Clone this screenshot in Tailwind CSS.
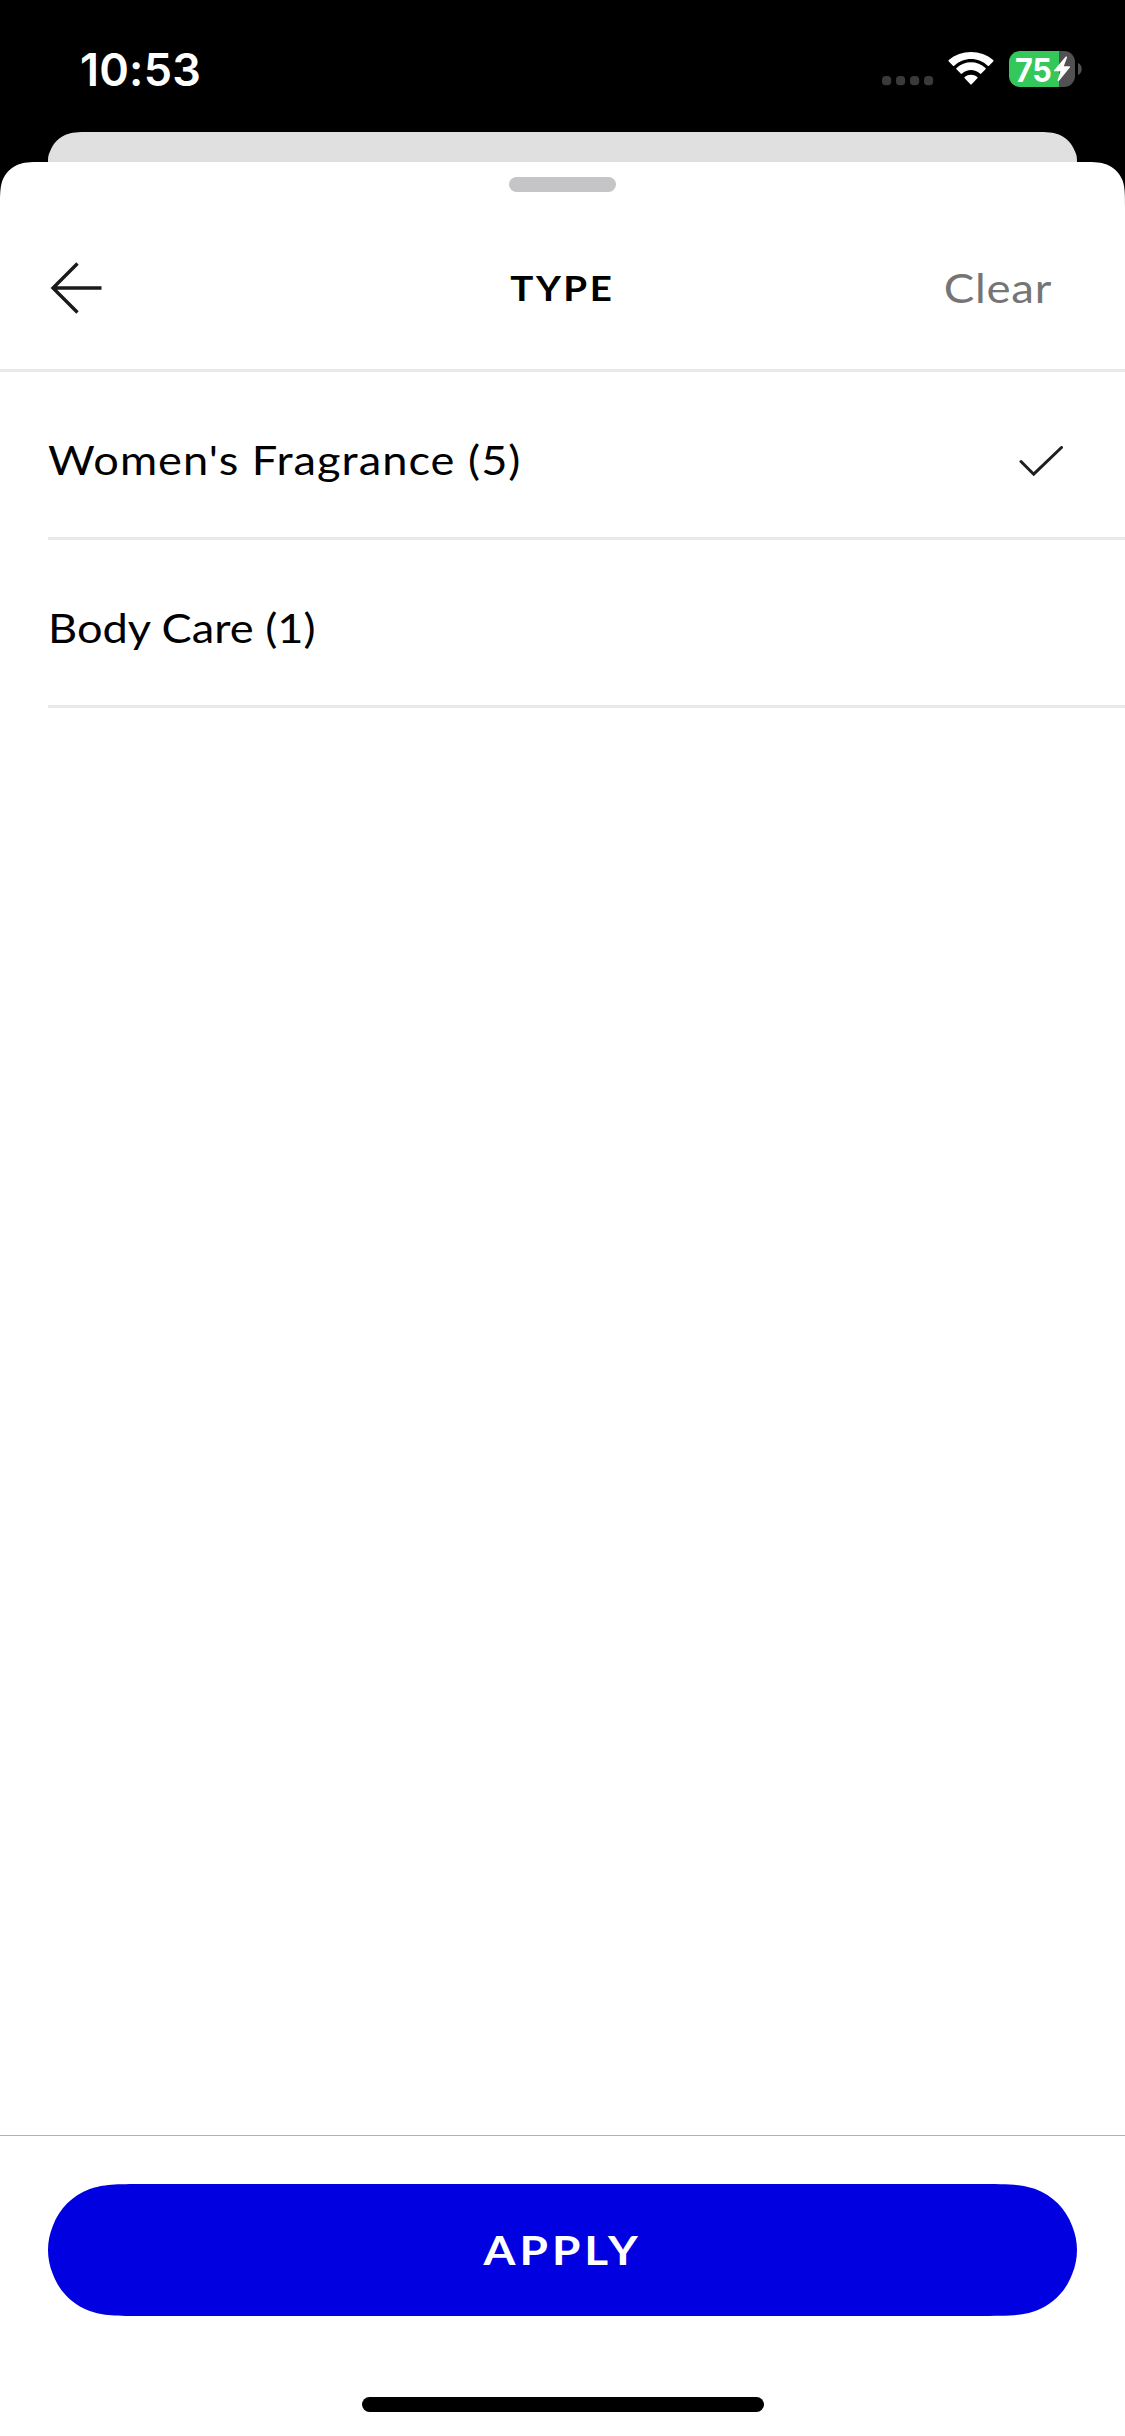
<!DOCTYPE html>
<html lang="en">
<head>
<meta charset="utf-8">
<title>Filter by type</title>
<script src="https://cdn.jsdelivr.net/npm/@tailwindcss/browser@4"></script>
</head>
<body class="bg-black">
<div class="flex h-[2436px] w-[1125px] flex-col overflow-hidden bg-black font-['Lato',sans-serif] text-black">
  <!-- status bar -->
  <header class="flex h-[132px] shrink-0 items-start justify-between pl-20 pr-[43px] font-['Inter',sans-serif] text-white">
    <time class="mt-[43px] text-[45px] leading-[54px] font-semibold tracking-[0.2px]">10:53</time>
    <div class="mt-[51px] flex h-9 items-start">
      <svg class="mt-[25px] h-[10px] w-[52px]" viewBox="0 0 52 10" fill="#3a3a3a"><rect x="0" y="0" width="9.2" height="9.2" rx="3.8"/><rect x="14" y="0" width="9.2" height="9.2" rx="3.8"/><rect x="28" y="0" width="9.2" height="9.2" rx="3.8"/><rect x="42" y="0" width="9.2" height="9.2" rx="3.8"/></svg>
      <svg class="mt-px ml-[14px] h-[33px] w-[46px]" viewBox="0 0 46 33" fill="#fff"><path d="M23 7.1c6.3 0 12.200 2.400 16.700 6.700.4.4.9.4 1.300 0l4.200-4.300c.4-.4.4-1 0-1.400C33.100-2.700 12.900-2.700.8 8.100c-.4.4-.4 1 0 1.400L5 13.800c.4.4.9.4 1.300 0C10.800 9.500 16.700 7.100 23 7.100zM23 18c3.300 0 6.500 1.300 8.900 3.600.4.4 1 .4 1.400 0l4.200-4.300c.4-.4.4-1 0-1.400-8.100-7.700-20.900-7.700-29 0-.4.4-.4 1 0 1.400l4.200 4.300c.4.4 1 .4 1.400 0C16.500 19.300 19.700 18 23 18zM29.300 26.300c.4-.4.4-1 0-1.400-3.600-3-9-3-12.600 0-.4.4-.4 1 0 1.400l5.600 5.900c.4.4 1 .4 1.400 0z"/></svg>
      <div class="relative ml-[15px] flex h-9 w-[66px] items-center rounded-[11px] bg-[linear-gradient(to_right,#34c759_50px,#515153_50px)] pl-[6px]">
        <span class="mt-px origin-left scale-x-93 text-[33px] leading-9 font-bold tracking-[-0.3px]">75</span>
        <svg class="absolute top-[5px] left-[44px] h-[26px] w-[18px]" viewBox="0 0 19 27" fill="#fff"><path d="M13.300.7 1.200 14.700c-.5.6-.2 1.300.6 1.300h6.100L4.900 25c-.3 1.100.8 1.600 1.500.8L17.800 11.900c.5-.6.200-1.300-.6-1.300h-5.800l3.300-9.100C15.100.4 14-.1 13.300.7z"/></svg>
      </div>
      <svg class="mt-3 ml-[3px] h-3 w-[4px]" viewBox="0 0 4 12" fill="#515153"><path d="M0 0c5 2 5 10 0 12z"/></svg>
    </div>
  </header>
  <!-- card peeking out behind the sheet -->
  <div class="relative mx-12 h-[30px] shrink-0 bg-[#e0e0e0] [clip-path:path('M0_30C0_26_0_23_2.200_18.900C5.100_11.200_11.200_5.100_18.900_2.200L20.100_2C26_0_32.700_0_45.900_0H983.100C996.300_0_1003_0_1008.900_2L1010.100_2.200C1017.800_5.100_1023.900_11.200_1026.800_18.900C1029_23_1029_26_1029_30Z')]"></div>
  <main class="flex grow flex-col bg-white [clip-path:path('M0_45.900C0_32.700_0_26_2.200_18.900C5.100_11.200_11.200_5.100_18.900_2.200L20.100_2C26_0_32.700_0_45.900_0H1079.100C1092.300_0_1099_0_1104.900_2L1106.100_2.200C1113.800_5.100_1119.900_11.200_1122.800_18.900C1125_26_1125_32.700_1125_45.900V2274H0Z')]">
    <div class="mt-[15px] h-[15px] w-[107px] shrink-0 self-center rounded-[7.5px] bg-[#c5c5c7]"></div>
    <div class="grid h-[180px] shrink-0 grid-cols-[1fr_auto_1fr] items-center border-b-[3px] border-[#e9e9e9] pl-12 pr-[73px]">
      <button class="mt-[15px] justify-self-start" aria-label="Back"><svg class="block h-[56px] w-[58px]" viewBox="0 0 58 56" fill="none" stroke="#1a1a1a" stroke-width="3.400"><path d="M29.500 3.500 5 28l24.500 24.500M5 28h48.500"/></svg></button>
      <h1 class="ml-[25px] mt-[13px] scale-x-110 text-[35px] leading-[42px] font-bold tracking-[2.300px]">TYPE</h1>
      <button class="mt-[15px] origin-right scale-x-114 justify-self-end text-[40px] leading-12 tracking-[0.700px] text-[#757575]">Clear</button>
    </div>
    <ul class="pl-12 text-[40px] leading-12">
      <li class="flex h-[168px] items-center justify-between border-b-[3px] border-[#e9e9e9] pr-[60px]">
        <span class="mt-[11px] origin-left scale-x-113 tracking-[0.900px]">Women's Fragrance (5)</span>
        <svg class="mt-[14px] h-[32px] w-[48px]" viewBox="0 0 48 32" fill="none" stroke="#1f1f1f" stroke-width="3" stroke-linecap="round"><path d="m4 15.500 12.700 12.700L44.500 1.500"/></svg>
      </li>
      <li class="flex h-[168px] items-center border-b-[3px] border-[#e9e9e9]"><span class="mt-[11px] origin-left scale-x-113">Body Care (1)</span></li>
    </ul>
    <footer class="mt-auto flex h-[301px] shrink-0 flex-col items-center border-t border-[#b2b2b2] px-12 pt-12">
      <button class="flex h-[132px] w-full justify-center bg-[#0000e1] text-[41px] leading-[132px] font-bold tracking-[3.600px] text-white [clip-path:path('M0_66C0_58_1.500_50_4.900_41.700C11.200_24.600_24.600_11.200_41.700_4.900L44.200_4.300C57.300_0_71.800_0_100.900_0H928.100C957.200_0_971.700_0_984.800_4.300L987.300_4.900C1004.400_11.200_1017.800_24.600_1024.100_41.700C1027.500_50_1029_58_1029_66C1029_74_1027.500_82_1024.100_90.300C1017.800_107.400_1004.400_120.800_987.300_127.100L984.800_127.700C971.700_132_957.200_132_928.100_132H100.900C71.800_132_57.300_132_44.200_127.700L41.700_127.100C24.600_120.800_11.200_107.400_4.900_90.300C1.500_82_0_74_0_66Z')]"><span class="scale-x-112">APPLY</span></button>
      <div class="mt-[81px] ml-px h-[15px] w-[402px] rounded-full bg-black"></div>
    </footer>
  </main>
</div>
</body>
</html>
